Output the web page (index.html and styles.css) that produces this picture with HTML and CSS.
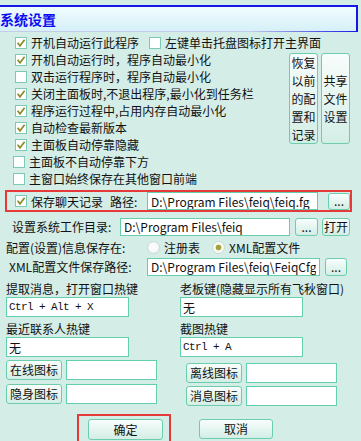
FILE: index.html
```html
<!DOCTYPE html>
<html lang="zh-CN">
<head>
  <meta charset="UTF-8">
  <title>系统设置</title>
  <link rel="stylesheet" href="styles.css">
</head>
<body>

  <div class="title">系统设置</div>

  <div class="top-row">
    <label class="chk"><span class="box"><svg viewBox="0 0 10 10"><path d="M1.6 4.8l2.4 3 4.6-6"/></svg></span>开机自动运行此程序</label>
    <label class="chk"><span class="box"></span>左键单击托盘图标打开主界面</label>
  </div>

  <div class="block">
    <div class="opts">
      <label class="chk"><span class="box"><svg viewBox="0 0 10 10"><path d="M1.6 4.8l2.4 3 4.6-6"/></svg></span>开机自动运行时，程序自动最小化</label>
      <label class="chk"><span class="box"></span>双击运行程序时，程序自动最小化</label>
      <label class="chk"><span class="box"><svg viewBox="0 0 10 10"><path d="M1.6 4.8l2.4 3 4.6-6"/></svg></span>关闭主面板时,不退出程序,最小化到任务栏</label>
      <label class="chk"><span class="box"><svg viewBox="0 0 10 10"><path d="M1.6 4.8l2.4 3 4.6-6"/></svg></span>程序运行过程中,占用内存自动最小化</label>
      <label class="chk"><span class="box"><svg viewBox="0 0 10 10"><path d="M1.6 4.8l2.4 3 4.6-6"/></svg></span>自动检查最新版本</label>
      <label class="chk"><span class="box"><svg viewBox="0 0 10 10"><path d="M1.6 4.8l2.4 3 4.6-6"/></svg></span>主面板自动停靠隐藏</label>
      <label class="chk shift"><span class="box"></span>主面板不自动停靠下方</label>
      <label class="chk shift"><span class="box"></span>主窗口始终保存在其他窗口前端</label>
    </div>
    <div class="side">
      <button class="btn tall">恢复<br>以前<br>的配<br>置和<br>记录</button>
      <button class="btn tall">共享<br>文件<br>设置</button>
    </div>
  </div>

  <div class="save">
    <label class="chk"><span class="box"><svg viewBox="0 0 10 10"><path d="M1.6 4.8l2.4 3 4.6-6"/></svg></span>保存聊天记录</label>
    <span class="path-label">路径:</span>
    <input class="field save-path" value="D:\Program Files\feiq\feiq.fg">
    <button class="btn dots save-dots">...</button>
  </div>

  <div class="line dir-line">
    <span class="dir-label">设置系统工作目录:</span>
    <input class="field dir-path" value="D:\Program Files\feiq">
    <button class="btn dots">...</button>
    <button class="btn open">打开</button>
  </div>

  <div class="line store-line">
    <span class="store-label">配置(设置)信息保存在:</span>
    <span class="radio"></span>注册表
    <span class="radio on second"></span>XML配置文件
  </div>

  <div class="line xml-line">
    <span class="xml-label">XML配置文件保存路径:</span>
    <input class="field xml-path" value="D:\Program Files\feiq\FeiqCfg.xml">
    <button class="btn dots">...</button>
  </div>

  <div class="cols">
    <div class="col">
      <div class="cap">提取消息，打开窗口热键</div>
      <input class="field key mono" value="Ctrl + Alt + X">
      <div class="cap">最近联系人热键</div>
      <input class="field key" value="无">
      <div class="icon-row"><button class="btn icon">在线图标</button><input class="field icon-field"></div>
      <div class="icon-row"><button class="btn icon">隐身图标</button><input class="field icon-field"></div>
    </div>
    <div class="col right">
      <div class="cap">老板键(隐藏显示所有飞秋窗口)</div>
      <input class="field key" value="无">
      <div class="cap">截图热键</div>
      <input class="field key mono" value="Ctrl + A">
      <div class="icon-row"><button class="btn icon">离线图标</button><input class="field icon-field"></div>
      <div class="icon-row"><button class="btn icon">消息图标</button><input class="field icon-field"></div>
    </div>
  </div>

  <div class="foot">
    <div class="ok-frame"><button class="btn ok">确定</button></div>
    <button class="btn cancel">取消</button>
  </div>

</body>
</html>
```

FILE: styles.css
```css
* {
  box-sizing: border-box;
}
body {
  margin: 0;
  width: 361px;
  height: 441px;
  overflow: hidden;
  background: #d4ede7;
  font: 12px/17px "Noto Sans CJK SC", "Noto Sans", sans-serif;
  color: #111;
}

.title {
  margin: 5px 3px 0 0;
  height: 27px;
  border-top: 2px solid #1616e8;
  border-right: 2px solid #1616e8;
  background:
    linear-gradient(to right, #c4cde6 70%, #1a1ae6) bottom / 100% 1px no-repeat,
    linear-gradient(#f0fdff, #d5eff8);
  color: #0c0cf2;
  font-weight: bold;
  font-size: 14px;
  line-height: 24px;
}

.chk {
  display: flex;
  align-items: center;
  height: 17px;
  white-space: nowrap;
}
.box {
  display: flex;
  align-items: center;
  justify-content: center;
  width: 12px;
  height: 12px;
  margin-right: 4px;
  border: 1px solid #7ccab5;
  background: #fff;
}
.box svg {
  width: 10px;
  height: 10px;
  fill: none;
  stroke: #8c8b2c;
  stroke-width: 1.7;
}

.top-row {
  display: flex;
  gap: 10px;
  margin-top: 2px;
  padding-left: 15px;
}

.block {
  display: flex;
}
.opts {
  flex: 1;
  padding-left: 15px;
}
.shift {
  margin-left: -2px;
}
.side {
  display: flex;
  gap: 3px;
  margin: 2px 11px 0 0;
}

.btn {
  font: inherit;
  color: #111;
  padding: 0;
  border: 1px solid #6bcdac;
  border-radius: 3px;
  background: linear-gradient(#f8fdfc, #d3eee6);
  line-height: 1;
}
.tall {
  width: 29px;
  height: 91px;
  line-height: 18px;
}

.field {
  font: inherit;
  color: #111;
  height: 18px;
  padding: 0 3px;
  border: 1px solid #64cfad;
  background: #fff;
  outline: none;
}
.dots {
  width: 22px;
  height: 18px;
  margin-left: 5px;
  line-height: 14px;
}

.save {
  display: flex;
  align-items: center;
  height: 22px;
  margin: 3px 9px 0 5px;
  padding-left: 8px;
  border: 2px solid #e63a3a;
}
.path-label {
  width: 37px;
  margin-left: 7px;
}
.save-path {
  width: 171px;
}
.save-dots {
  margin-left: 10px;
  height: 17px;
}

.line {
  display: flex;
  align-items: center;
  white-space: nowrap;
}
.dir-line {
  height: 19px;
  margin-top: 5px;
  padding-left: 12px;
}
.dir-label {
  width: 108px;
}
.dir-path {
  width: 170px;
}
.dir-line .dots {
  width: 23px;
}
.open {
  width: 28px;
  height: 18px;
  margin-left: 4px;
}

.store-line {
  height: 18px;
  margin-top: 2px;
  padding-left: 6px;
}
.store-label {
  width: 141px;
}
.radio {
  width: 13px;
  height: 13px;
  margin-right: 4px;
  border: 1px solid #c9d9d5;
  border-radius: 50%;
  background: radial-gradient(circle, #fff 0, #edf3f1 100%);
}
.radio.on {
  background: radial-gradient(circle, #a3a23e 0 2.5px, #f4f6ee 3.2px, #fff 100%);
}
.radio.second {
  margin-left: 12px;
}

.xml-line {
  height: 19px;
  margin-top: 1px;
  padding-left: 9px;
}
.xml-label {
  width: 138px;
}
.xml-path {
  width: 173px;
}

.cols {
  display: grid;
  grid-template-columns: 174px 1fr;
  margin-top: 4px;
  padding-left: 6px;
}
.col {
  display: flex;
  flex-direction: column;
  align-items: flex-start;
}
.cap {
  height: 17px;
  white-space: nowrap;
}
.key {
  width: 123px;
  height: 20px;
  padding: 0 2px;
}
.key + .cap {
  margin-top: 3px;
}
.mono {
  font-family: "Liberation Mono", monospace;
  font-size: 11px;
  letter-spacing: -0.6px;
}
.icon-row {
  display: flex;
  gap: 4px;
  margin-top: 3px;
}
.icon-row + .icon-row {
  margin-top: 4px;
}
.icon {
  width: 56px;
  height: 20px;
}
.icon-field {
  width: 91px;
  height: 20px;
}
.right .icon-row {
  margin-top: 6px;
  padding-left: 6px;
}
.right .icon-row + .icon-row {
  margin-top: 3px;
}

.foot {
  display: flex;
  align-items: flex-start;
  margin-top: 8px;
}
.ok-frame {
  width: 94px;
  height: 29px;
  margin-left: 77px;
  padding: 3px 0 0 9px;
  border: 2px solid #e63a3a;
}
.ok {
  width: 75px;
  height: 21px;
}
.cancel {
  width: 74px;
  height: 20px;
  margin: 5px 0 0 28px;
}
```
